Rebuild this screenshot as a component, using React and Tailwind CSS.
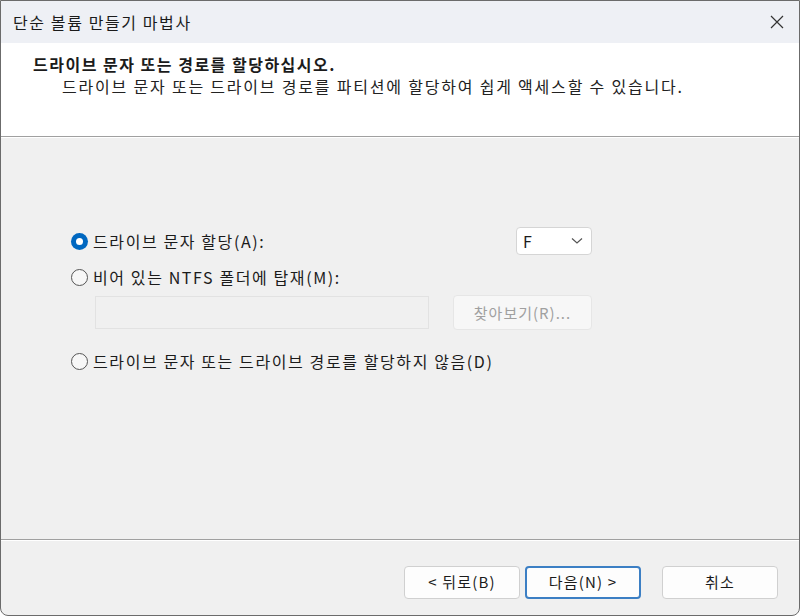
import React, { useState } from 'react';

const font = { fontFamily: '"Noto Sans CJK KR", "Noto Sans", sans-serif' };

const Radio = ({ checked, onClick }) => (
  <button
    type="button"
    onClick={onClick}
    className="flex h-[18px] w-[18px] items-center justify-center"
  >
    {checked ? (
      <span className="flex h-[17px] w-[17px] items-center justify-center rounded-full bg-[#0067c0]">
        <span className="h-[7px] w-[7px] rounded-full bg-white" />
      </span>
    ) : (
      <span className="h-[17px] w-[17px] rounded-full border border-[#555555] bg-[#f7f7f7]" />
    )}
  </button>
);

const WizardButton = ({ children, primary }) => (
  <button
    type="button"
    className={
      primary
        ? 'h-[33px] w-[116px] rounded-[4px] border-2 border-[#3c7fc4] bg-[#fdfdfd] text-[15px] tracking-[1.2px] text-[#1b1b1b]'
        : 'h-[33px] w-[116px] rounded-[4px] border border-[#d0d0d0] bg-[#fdfdfd] text-[15px] tracking-[1.2px] text-[#1b1b1b]'
    }
  >
    {children}
  </button>
);

export default function App() {
  const [choice, setChoice] = useState('letter');

  return (
    <div
      style={font}
      className="flex h-[616px] w-[800px] flex-col overflow-hidden rounded-b-[8px] border border-[#6b6b6b] bg-[#f0f0f0] text-[#1b1b1b]"
    >
      {/* title bar */}
      <div className="flex h-[42px] items-center justify-between bg-[#eef0f5] pl-[12px] pr-[14px]">
        <span className="text-[16px] tracking-[1.6px]">단순 볼륨 만들기 마법사</span>
        <svg width="16" height="16" viewBox="0 0 16 16" className="text-[#333]">
          <path d="M2 2 L14 14 M14 2 L2 14" stroke="currentColor" strokeWidth="1.2" />
        </svg>
      </div>

      {/* header */}
      <div className="h-[93px] bg-white pl-[32px] pt-[11px]">
        <div className="text-[16px] font-bold leading-[21px] tracking-[1.5px]">
          드라이브 문자 또는 경로를 할당하십시오.
        </div>
        <div className="pl-[29px] text-[16px] leading-[22px] tracking-[1.8px] text-[#222]">
          드라이브 문자 또는 드라이브 경로를 파티션에 할당하여 쉽게 액세스할 수 있습니다.
        </div>
      </div>
      <div className="h-[1px] bg-[#a0a0a0]" />
      <div className="h-[1px] bg-white" />

      {/* body */}
      <div className="flex-1 pl-[69px] pt-[89px] text-[16px] leading-[22px] tracking-[1.6px]">
        <div className="flex w-[522px] items-center justify-between">
          <label className="flex items-center gap-[5px]">
            <Radio checked={choice === 'letter'} onClick={() => setChoice('letter')} />
            드라이브 문자 할당(A):
          </label>
          <div className="flex h-[28px] w-[76px] items-center justify-between rounded-[4px] border border-[#d5d5d5] bg-white pl-[6px] pr-[8px] tracking-normal">
            F
            <svg width="12" height="8" viewBox="0 0 12 8">
              <path d="M1 1.5 L6 6 L11 1.5" fill="none" stroke="#555" strokeWidth="1.2" />
            </svg>
          </div>
        </div>

        <label className="mt-[11px] flex items-center gap-[5px]">
          <Radio checked={choice === 'folder'} onClick={() => setChoice('folder')} />
          비어 있는 NTFS 폴더에 탑재(M):
        </label>
        <div className="mt-[7px] flex items-center gap-[24px] pl-[25px]">
          <div className="h-[33px] w-[334px] border border-[#e2e2e2] bg-[#f0f0f0]" />
          <div className="flex h-[35px] w-[139px] items-center justify-center rounded-[4px] border border-[#e6e6e6] bg-[#f7f7f7] text-[15px] tracking-[1px] text-[#a0a0a0]">
            찾아보기(R)...
          </div>
        </div>

        <label className="mt-[20px] flex items-center gap-[5px]">
          <Radio checked={choice === 'none'} onClick={() => setChoice('none')} />
          드라이브 문자 또는 드라이브 경로를 할당하지 않음(D)
        </label>
      </div>

      {/* footer */}
      <div className="h-[1px] bg-[#a0a0a0]" />
      <div className="h-[1px] bg-white" />
      <div className="flex h-[74px] items-start justify-end pr-[21px] pt-[25px]">
        <WizardButton>&lt; 뒤로(B)</WizardButton>
        <div className="w-[5px]" />
        <WizardButton primary>다음(N) &gt;</WizardButton>
        <div className="w-[21px]" />
        <WizardButton>취소</WizardButton>
      </div>
    </div>
  );
}
